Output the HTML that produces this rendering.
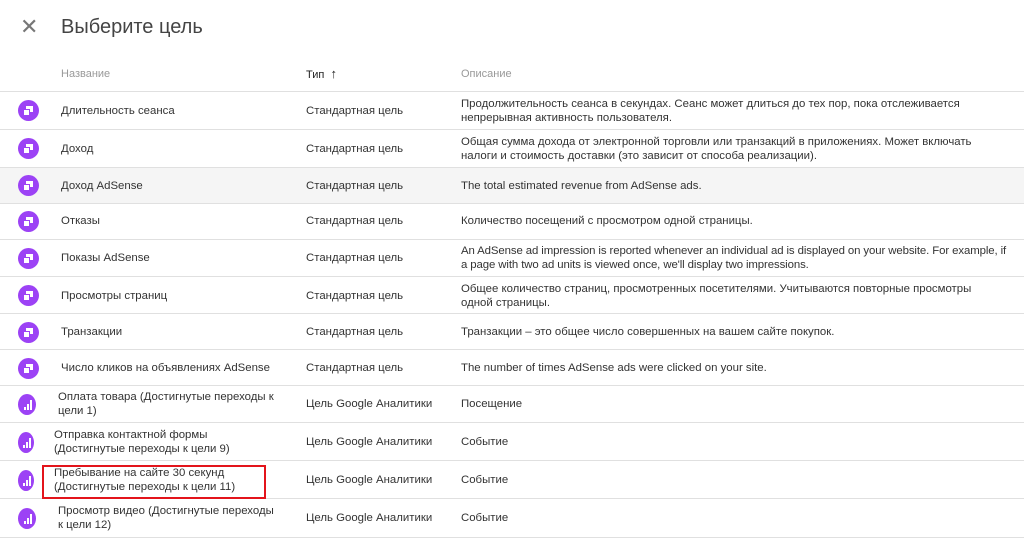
<!DOCTYPE html>
<html><head><meta charset="utf-8"><style>
body{margin:0;width:1024px;height:541px;background:#fff;font-family:"Liberation Sans",Arial,sans-serif;color:#333;overflow:hidden;position:relative}
.t{position:absolute;white-space:nowrap;font-size:11.4px;line-height:14px}
.row{position:absolute;left:0;width:1024px;border-bottom:1px solid #e0e0e0}
.ic{position:absolute;width:21px;height:21px;border-radius:50%;background:#9c42f5}
.ic svg{display:block}
</style></head><body>
<div class="t" style="left:20px;top:15px;font-size:22px;line-height:24px;color:#777">✕</div>
<div class="t" style="left:61px;top:15px;font-size:20px;line-height:24px;color:#444">Выберите цель</div>
<div class="t" style="left:61px;top:67px;color:#999;font-size:11px">Название</div>
<div class="t" style="left:306px;top:67px;color:#222;font-size:11px">Тип &nbsp;<span style="font-size:13px">↑</span></div>
<div class="t" style="left:461px;top:67px;color:#999;font-size:11px">Описание</div>
<div class="row" style="top:91px;height:0"></div>

<div class="row" style="top:92px;height:37px"></div>
<div class="row" style="top:130px;height:37px"></div>
<div class="row" style="top:168px;height:35px;background:#f5f5f5"></div>
<div class="row" style="top:204px;height:35px"></div>
<div class="row" style="top:240px;height:36px"></div>
<div class="row" style="top:277px;height:36px"></div>
<div class="row" style="top:314px;height:35px"></div>
<div class="row" style="top:350px;height:35px"></div>
<div class="row" style="top:386px;height:36px"></div>
<div class="row" style="top:423px;height:37px"></div>
<div class="row" style="top:461px;height:37px"></div>
<div class="row" style="top:499px;height:38px"></div>

<div class="ic" style="left:18px;top:100px"><svg width="21" height="21"><path d="M8 6h7v6h-3v-3H8zM6 10h5v5H6z" fill="#fff"/></svg></div>
<div class="ic" style="left:18px;top:138px"><svg width="21" height="21"><path d="M8 6h7v6h-3v-3H8zM6 10h5v5H6z" fill="#fff"/></svg></div>
<div class="ic" style="left:18px;top:175px"><svg width="21" height="21"><path d="M8 6h7v6h-3v-3H8zM6 10h5v5H6z" fill="#fff"/></svg></div>
<div class="ic" style="left:18px;top:211px"><svg width="21" height="21"><path d="M8 6h7v6h-3v-3H8zM6 10h5v5H6z" fill="#fff"/></svg></div>
<div class="ic" style="left:18px;top:248px"><svg width="21" height="21"><path d="M8 6h7v6h-3v-3H8zM6 10h5v5H6z" fill="#fff"/></svg></div>
<div class="ic" style="left:18px;top:285px"><svg width="21" height="21"><path d="M8 6h7v6h-3v-3H8zM6 10h5v5H6z" fill="#fff"/></svg></div>
<div class="ic" style="left:18px;top:322px"><svg width="21" height="21"><path d="M8 6h7v6h-3v-3H8zM6 10h5v5H6z" fill="#fff"/></svg></div>
<div class="ic" style="left:18px;top:358px"><svg width="21" height="21"><path d="M8 6h7v6h-3v-3H8zM6 10h5v5H6z" fill="#fff"/></svg></div>

<div class="ic" style="left:18px;top:394px;width:18px"><svg width="18" height="21"><path d="M6 13h2v3H6zM9 10h2v6H9zM12 6h2v10h-2z" fill="#fff"/></svg></div>
<div class="ic" style="left:18px;top:432px;width:16px"><svg width="16" height="21"><path d="M5 13h2v3H5zM8 10h2v6H8zM11 6h2v10h-2z" fill="#fff"/></svg></div>
<div class="ic" style="left:18px;top:470px;width:16px"><svg width="16" height="21"><path d="M5 13h2v3H5zM8 10h2v6H8zM11 6h2v10h-2z" fill="#fff"/></svg></div>
<div class="ic" style="left:18px;top:508px;width:18px"><svg width="18" height="21"><path d="M6 13h2v3H6zM9 10h2v6H9zM12 6h2v10h-2z" fill="#fff"/></svg></div>

<div class="t" style="left:61px;top:104px">Длительность сеанса</div>
<div class="t" style="left:61px;top:142px">Доход</div>
<div class="t" style="left:61px;top:179px">Доход AdSense</div>
<div class="t" style="left:61px;top:214px">Отказы</div>
<div class="t" style="left:61px;top:251px">Показы AdSense</div>
<div class="t" style="left:61px;top:289px">Просмотры страниц</div>
<div class="t" style="left:61px;top:325px">Транзакции</div>
<div class="t" style="left:61px;top:361px">Число кликов на объявлениях AdSense</div>
<div class="t" style="left:58px;top:390px">Оплата товара (Достигнутые переходы к<br>цели 1)</div>
<div class="t" style="left:54px;top:428px">Отправка контактной формы<br>(Достигнутые переходы к цели 9)</div>
<div class="t" style="left:54px;top:466px">Пребывание на сайте 30 секунд<br>(Достигнутые переходы к цели 11)</div>
<div style="position:absolute;left:42px;top:465px;width:220px;height:30px;border:2px solid #e3141b"></div>
<div class="t" style="left:58px;top:504px">Просмотр видео (Достигнутые переходы<br>к цели 12)</div>

<div class="t" style="left:306px;top:104px">Стандартная цель</div>
<div class="t" style="left:306px;top:142px">Стандартная цель</div>
<div class="t" style="left:306px;top:179px">Стандартная цель</div>
<div class="t" style="left:306px;top:214px">Стандартная цель</div>
<div class="t" style="left:306px;top:251px">Стандартная цель</div>
<div class="t" style="left:306px;top:289px">Стандартная цель</div>
<div class="t" style="left:306px;top:325px">Стандартная цель</div>
<div class="t" style="left:306px;top:361px">Стандартная цель</div>
<div class="t" style="left:306px;top:397px">Цель Google Аналитики</div>
<div class="t" style="left:306px;top:435px">Цель Google Аналитики</div>
<div class="t" style="left:306px;top:473px">Цель Google Аналитики</div>
<div class="t" style="left:306px;top:511px">Цель Google Аналитики</div>

<div class="t" style="left:461px;top:97px">Продолжительность сеанса в секундах. Сеанс может длиться до тех пор, пока отслеживается<br>непрерывная активность пользователя.</div>
<div class="t" style="left:461px;top:135px">Общая сумма дохода от электронной торговли или транзакций в приложениях. Может включать<br>налоги и стоимость доставки (это зависит от способа реализации).</div>
<div class="t" style="left:461px;top:179px">The total estimated revenue from AdSense ads.</div>
<div class="t" style="left:461px;top:214px">Количество посещений с просмотром одной страницы.</div>
<div class="t" style="left:461px;top:244px;letter-spacing:-0.1px">An AdSense ad impression is reported whenever an individual ad is displayed on your website. For example, if<br>a page with two ad units is viewed once, we'll display two impressions.</div>
<div class="t" style="left:461px;top:282px">Общее количество страниц, просмотренных посетителями. Учитываются повторные просмотры<br>одной страницы.</div>
<div class="t" style="left:461px;top:325px">Транзакции – это общее число совершенных на вашем сайте покупок.</div>
<div class="t" style="left:461px;top:361px">The number of times AdSense ads were clicked on your site.</div>
<div class="t" style="left:461px;top:397px">Посещение</div>
<div class="t" style="left:461px;top:435px">Событие</div>
<div class="t" style="left:461px;top:473px">Событие</div>
<div class="t" style="left:461px;top:511px">Событие</div>
</body></html>
